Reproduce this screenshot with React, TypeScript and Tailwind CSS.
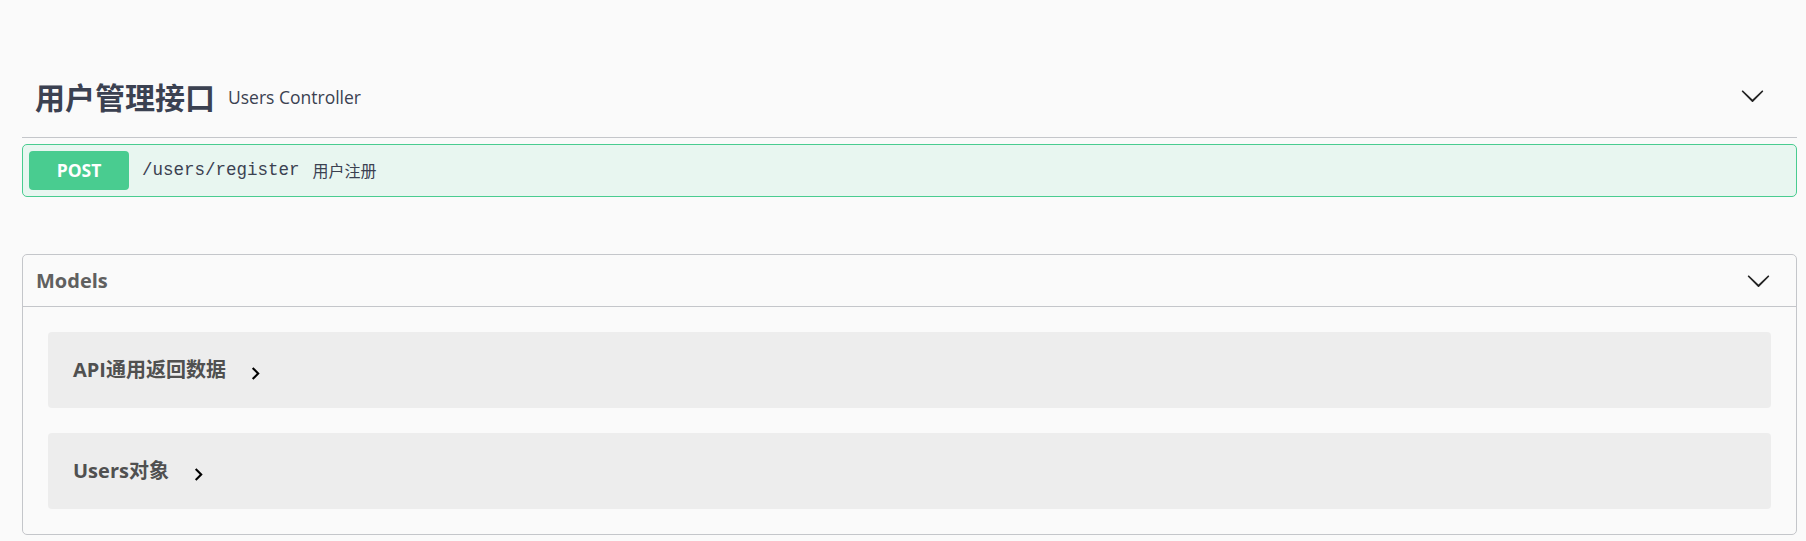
import { ReactNode } from "react";

const sans = "font-['Open_Sans','Noto_Sans_CJK_SC',sans-serif]";

const ArrowDown = () => (
  <svg width="25" height="25" viewBox="0 0 20 20" className="shrink-0">
    <path
      fill="#222"
      d="M17.418 6.109c.272-.268.709-.268.979 0s.271.701 0 .969l-7.908 7.83c-.27.268-.707.268-.979 0l-7.908-7.83c-.27-.268-.27-.701 0-.969.271-.268.709-.268.979 0L10 13.25l7.418-7.141z"
    />
  </svg>
);

const ArrowRight = () => (
  <svg width="25" height="25" viewBox="0 0 24 24" className="ml-[17px] mt-[6px] shrink-0">
    <path fill="#000" d="M10 6L8.59 7.41 13.17 12l-4.58 4.59L10 18l6-6z" />
  </svg>
);

const ModelRow = ({ children }: { children: ReactNode }) => (
  <div className="flex h-[76px] items-center rounded-[4px] bg-[#ededed] px-[25px]">
    <span className="text-[20px] font-bold text-[#505050]">{children}</span>
    <ArrowRight />
  </div>
);

export default function App() {
  return (
    <div className={`min-h-screen bg-[#fafafa] pt-[57px] pl-[22px] pr-[9px] ${sans}`}>
      {/* tag header */}
      <div className="flex h-[81px] items-center border-b border-[#c4c6ca] pl-[13px] pr-[32px]">
        <h4 className="text-[30px] font-bold text-[#3b4151]">用户管理接口</h4>
        <small className="ml-[13px] text-[17.5px] text-[#3b4151]">Users Controller</small>
        <div className="mb-[3px] ml-auto">
          <ArrowDown />
        </div>
      </div>

      {/* operation */}
      <div className="mt-[6px] flex items-center rounded-[5px] border border-[#49cc90] bg-[#e8f6f0] p-[6px]">
        <span className="flex h-[39px] w-[100px] items-center justify-center rounded-[4px] bg-[#49cc90] text-[17.5px] font-bold text-white">
          POST
        </span>
        <span className="ml-[13px] font-['Liberation_Mono',monospace] text-[17.5px] text-[#3b4151]">
          /users/register
        </span>
        <span className="ml-[13px] text-[16px] text-[#3b4151]">用户注册</span>
      </div>

      {/* models */}
      <section className="mt-[57px] rounded-[5px] border border-[#c4c6ca]">
        <div className="flex h-[52px] items-center border-b border-[#c4c6ca] pl-[13px] pr-[25px]">
          <h4 className="text-[20px] font-bold text-[#606060]">Models</h4>
          <div className="ml-auto">
            <ArrowDown />
          </div>
        </div>
        <div className="flex flex-col gap-[25px] p-[25px]">
          <ModelRow>API通用返回数据</ModelRow>
          <ModelRow>Users对象</ModelRow>
        </div>
      </section>
    </div>
  );
}
